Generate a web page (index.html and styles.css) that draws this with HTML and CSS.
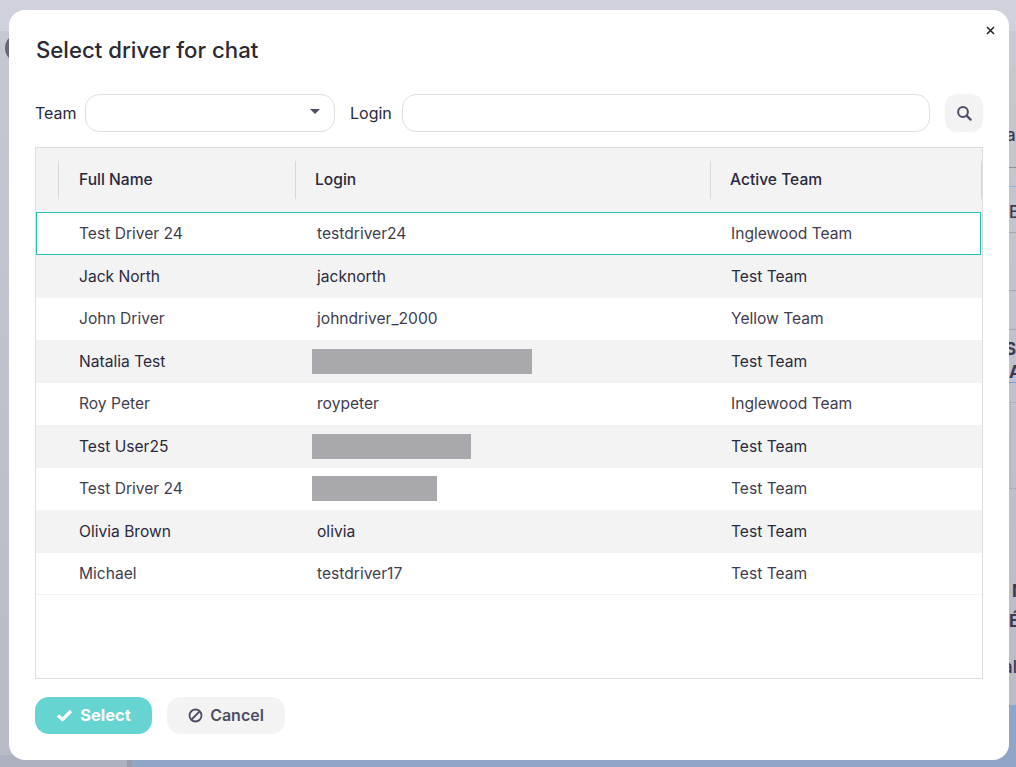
FILE: index.html
```html
<!DOCTYPE html>
<html lang="en">
<head>
<meta charset="utf-8">
<title>Select driver for chat</title>
<link rel="stylesheet" href="styles.css">
</head>
<body>
<div class="backdrop">
  <div class="bg-top"></div>
  <div class="bg-band"></div>
  <div class="bg-avatar"></div>
  <div class="bg-foot"></div>
  <div class="bg-gap"></div>
  <div class="bg-map"></div>
  <div class="bg-chart"></div>
  <span class="bg-text bg-a">a</span>
  <span class="bg-text bg-b">B</span>
  <span class="bg-text bg-s">S</span>
  <span class="bg-text bg-aa">A</span>
  <span class="bg-text bg-n">N</span>
  <span class="bg-text bg-e">É</span>
  <span class="bg-text bg-l">al</span>
  <div class="bg-line bg-l1"></div>
  <div class="bg-line bg-l2"></div>
  <div class="bg-line bg-l3"></div>
  <div class="bg-line bg-l4"></div>
  <div class="bg-line bg-l5"></div>
  <div class="bg-line bg-l6"></div>
</div>
<main class="modal">
  <button class="close" aria-label="Close">
    <svg width="9" height="9" viewBox="0 0 9 9"><path d="M1 1l7 7M8 1L1 8" stroke="#22222e" stroke-width="1.5" fill="none"/></svg>
  </button>
  <h1 class="title">Select driver for chat</h1>
  <div class="filters">
    <label class="label">Team</label>
    <div class="field select"><span class="caret"></span></div>
    <label class="label login-label">Login</label>
    <div class="field grow"></div>
    <button class="search" aria-label="Search">
      <svg width="16" height="16" viewBox="0 0 16 16"><circle cx="7" cy="7" r="4.9" stroke="#4f4e66" stroke-width="2" fill="none"/><path d="M10.6 10.6l4 4" stroke="#4f4e66" stroke-width="2.2" stroke-linecap="round"/></svg>
    </button>
  </div>
  <section class="table">
    <div class="row head">
      <div class="cell"></div>
      <div class="cell">Full Name</div>
      <div class="cell">Login</div>
      <div class="cell">Active Team</div>
    </div>
    <div class="row selected"><div></div><div class="cell">Test Driver 24</div><div class="cell">testdriver24</div><div class="cell">Inglewood Team</div></div>
    <div class="row alt"><div></div><div class="cell">Jack North</div><div class="cell">jacknorth</div><div class="cell">Test Team</div></div>
    <div class="row"><div></div><div class="cell">John Driver</div><div class="cell">johndriver_2000</div><div class="cell">Yellow Team</div></div>
    <div class="row alt"><div></div><div class="cell">Natalia Test</div><div class="cell"><span class="redact r-lg"></span></div><div class="cell">Test Team</div></div>
    <div class="row"><div></div><div class="cell">Roy Peter</div><div class="cell">roypeter</div><div class="cell">Inglewood Team</div></div>
    <div class="row alt"><div></div><div class="cell">Test User25</div><div class="cell"><span class="redact r-md"></span></div><div class="cell">Test Team</div></div>
    <div class="row"><div></div><div class="cell">Test Driver 24</div><div class="cell"><span class="redact r-sm"></span></div><div class="cell">Test Team</div></div>
    <div class="row alt"><div></div><div class="cell">Olivia Brown</div><div class="cell">olivia</div><div class="cell">Test Team</div></div>
    <div class="row last"><div></div><div class="cell">Michael</div><div class="cell">testdriver17</div><div class="cell">Test Team</div></div>
  </section>
  <footer class="actions">
    <button class="btn primary">
      <svg width="17" height="13" viewBox="0 0 17 13"><path d="M2 6.5l4.5 4 8.5-8.5" stroke="#fff" stroke-width="3.2" fill="none"/></svg>
      <span class="btn-text">Select</span>
    </button>
    <button class="btn secondary">
      <svg width="15" height="15" viewBox="0 0 15 15"><circle cx="7.5" cy="7.5" r="6" stroke="#4f4e66" stroke-width="1.8" fill="none"/><path d="M3.5 11.5l8-8" stroke="#4f4e66" stroke-width="1.8"/></svg>
      <span class="btn-text">Cancel</span>
    </button>
  </footer>
</main>
</body>
</html>
```
FILE: styles.css
```css
* { box-sizing: border-box; }
html, body { height: 100%; }
body {
  margin: 0;
  height: 767px;
  overflow: hidden;
  position: relative;
  background: #bfc1cb;
  font-family: Inter, "Noto Sans", sans-serif;
  color: #2b2a3d;
  padding: 10px 7px 7px 9px;
}
.backdrop { position: absolute; inset: 0; overflow: hidden; background: linear-gradient(#c6c8d2, #b8bac6); }
.bg-top { position: absolute; left: 0; top: 0; width: 1016px; height: 31px; background: #cfd2dc; }
.bg-band { position: absolute; left: 1009px; top: 31px; width: 7px; height: 35px; background: #c7cad4; }
.bg-avatar { position: absolute; left: 5px; top: 33px; width: 30px; height: 30px; border-radius: 50%; background: #666879; }
.bg-foot { position: absolute; left: 0; top: 755px; width: 127px; height: 12px; background: #aeb1c0; }
.bg-gap { position: absolute; left: 127px; top: 755px; width: 5px; height: 12px; background: #9a9cab; }
.bg-map { position: absolute; left: 132px; top: 705px; width: 884px; height: 62px; background: #8fa6c6; }
.bg-chart { position: absolute; left: 1010px; top: 402px; width: 6px; height: 87px; border: 1px dotted #a3a5b0; border-right: 0; }
.bg-text { position: absolute; font-size: 17px; font-weight: 700; color: #3a3b52; line-height: 20px; }
.bg-a { left: 1006px; top: 125px; font-weight: 500; }
.bg-b { left: 1009px; top: 202px; font-weight: 500; }
.bg-s { left: 1005px; top: 339px; }
.bg-aa { left: 1009px; top: 362px; }
.bg-n { left: 1012px; top: 581px; }
.bg-e { left: 1009px; top: 611px; }
.bg-l { left: 1003px; top: 657px; font-weight: 500; }
.bg-line { position: absolute; left: 1009px; width: 7px; height: 1px; background: #a3a5b0; }
.bg-l1 { top: 167px; background: #8d8f9c; }
.bg-l2 { top: 232px; }
.bg-l3 { top: 290px; }
.bg-l4 { top: 329px; }
.bg-l5 { top: 186px; background: #8fb6d8; }
.bg-l6 { top: 382px; background: #6fa3d0; }

.modal {
  position: relative;
  width: 1000px;
  height: 750px;
  background: #fff;
  border-radius: 16px;
  padding: 24px 26px 26px 26px;
  display: flex;
  flex-direction: column;
}
.close {
  position: absolute;
  top: 16px;
  right: 14px;
  padding: 0;
  border: 0;
  background: none;
  width: 9px;
  height: 9px;
  display: flex;
}
.title { margin: 0 0 0 1px; font-size: 22.2px; line-height: 32px; font-weight: 500; color: #2b2a35; height: 60px; }
.filters { display: flex; align-items: center; height: 38px; margin-bottom: 15px; }
.label { font-size: 16px; margin: 0 8px 0 1px; width: 41px; white-space: nowrap; text-indent: -1px; }
.login-label { margin-left: 15px; margin-right: 9px; width: 43px; text-indent: 0; }
.field { height: 38px; border: 1px solid #dfdfe2; border-radius: 14px; background: #fff; position: relative; }
.select { width: 250px; }
.grow { flex: 1; }
.caret {
  position: absolute;
  right: 14px;
  top: 14px;
  border-left: 5px solid transparent;
  border-right: 5px solid transparent;
  border-top: 5px solid #4f4e66;
}
.search {
  margin-left: 15px;
  width: 38px;
  height: 38px;
  border: 0;
  border-radius: 12px;
  background: #f3f3f3;
  display: flex;
  align-items: center;
  justify-content: center;
  padding: 0;
}
.table {
  width: 948px;
  height: 532px;
  border: 1px solid #dddddf;
  background: #fff;
}
.row {
  display: grid;
  grid-template-columns: 43px 237px 414px 1fr;
  height: 42.5px;
  padding-bottom: 0.5px;
  align-items: center;
  font-size: 15.6px;
  color: #3f3e50;
}
.row > .cell { white-space: nowrap; }
.row > .cell:nth-child(3) { padding-left: 1px; }
.row > .cell:nth-child(4) { padding-left: 1px; }
.head {
  height: 64px;
  padding-bottom: 0;
  background: #f3f3f3;
  font-weight: 500;
  color: #2b2a3d;
  grid-template-columns: 22px 237px 415px 1fr;
}
.head > .cell { border-left: 1px solid #d9d9db; height: 38px; line-height: 37px; padding-left: 20px !important; }
.head > .cell:nth-child(3), .head > .cell:nth-child(4) { padding-left: 19px !important; }
.head > .cell:first-child { border-left: 0; }
.head > .cell:last-child { border-right: 1px solid #d9d9db; }
.selected {
  height: 43px;
  padding-bottom: 1px;
  border: 1px solid #2bc1b5;
  margin-right: 1px;
  grid-template-columns: 42px 237px 414px 1fr;
}
.alt { background: #f3f3f3; color: #2b2a3d; }
.last { border-bottom: 1px solid #f3f3f3; }
.redact { display: block; height: 25px; margin-left: -5px; background: #a9a9ad; }
.r-lg { width: 220px; }
.r-md { width: 159px; }
.r-sm { width: 125px; }
.actions { display: flex; gap: 15px; margin-top: 18px; }
.btn {
  height: 37px;
  border: 0;
  border-radius: 14px;
  display: flex;
  align-items: center;
  justify-content: center;
  gap: 7px;
  font-family: inherit;
  font-size: 16px;
  font-weight: 600;
  padding: 0;
}
.btn-text { position: relative; top: -1px; }
.primary { width: 117px; background: #66d4d0; color: #fff; font-weight: 700; font-size: 16.4px; }
.secondary { width: 118px; background: #f3f3f3; color: #4f4e66; }
```
